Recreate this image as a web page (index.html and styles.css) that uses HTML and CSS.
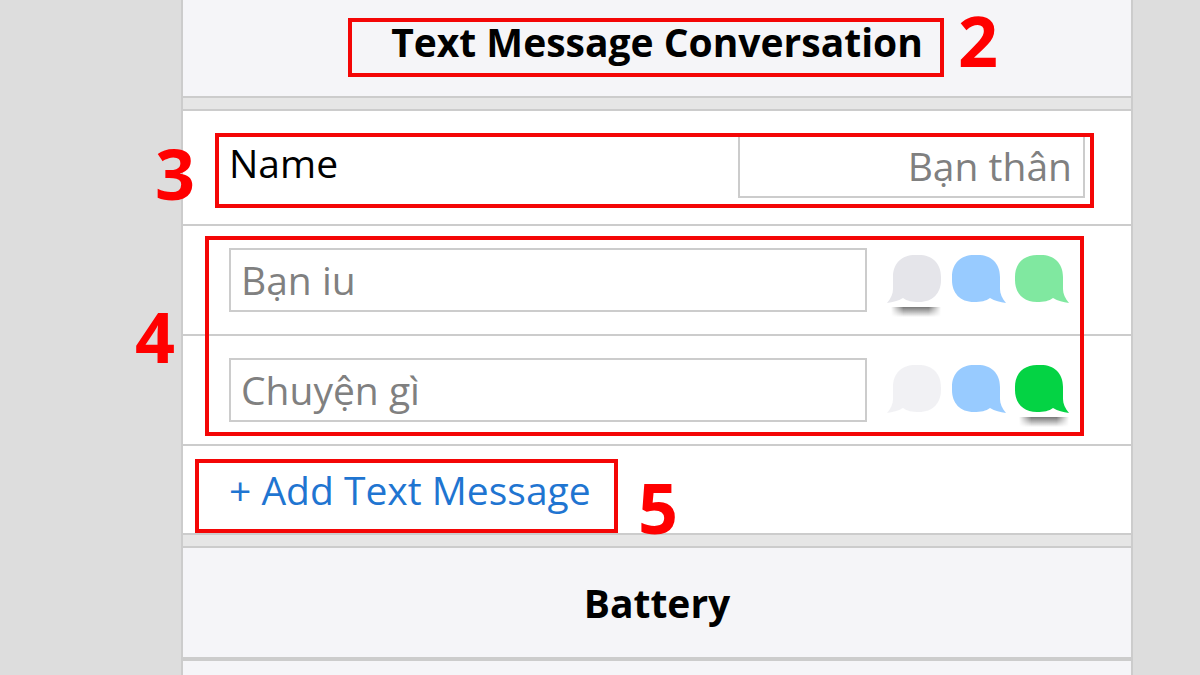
FILE: index.html
```html
<!DOCTYPE html>
<html lang="en">
  <head>
    <meta charset="UTF-8" />
    <meta name="viewport" content="width=device-width, initial-scale=1.0" />
    <title>Text Message Conversation</title>
    <link rel="stylesheet" href="styles.css">
  </head>
  <body>
    <svg width="0" height="0" class="defs" aria-hidden="true">
      <symbol id="bubble" viewBox="0 0 54 48">
        <path d="M48 22V34C48 39 50 43 54 48C48 47 43 46 38 43C34 46 29 47 22 47C8 47 0 38 0 25V22C0 8 9 0 22 0H26C39 0 48 8 48 22Z" />
      </symbol>
    </svg>

    <main class="panel">
      <header class="section-title">
        <h2>Text Message Conversation</h2>
        <div class="mark mark-title"><span class="step">2</span></div>
      </header>

      <form class="section">
        <div class="row name-row">
          <label for="name">Name</label>
          <input type="text" id="name" class="field" placeholder="Bạn thân">
          <div class="mark mark-name"><span class="step">3</span></div>
        </div>

        <div class="messages">
          <div class="row message-row">
            <input type="text" class="field" placeholder="Bạn iu" aria-label="Message 1">
            <div class="bubbles">
              <label class="bubble gray">
                <input type="radio" name="color1" aria-label="Gray" checked>
                <svg><use href="#bubble" /></svg>
              </label>
              <label class="bubble blue">
                <input type="radio" name="color1" aria-label="Blue">
                <svg><use href="#bubble" /></svg>
              </label>
              <label class="bubble green">
                <input type="radio" name="color1" aria-label="Green">
                <svg><use href="#bubble" /></svg>
              </label>
            </div>
          </div>
          <div class="row message-row">
            <input type="text" class="field" placeholder="Chuyện gì" aria-label="Message 2">
            <div class="bubbles">
              <label class="bubble gray">
                <input type="radio" name="color2" aria-label="Gray">
                <svg><use href="#bubble" /></svg>
              </label>
              <label class="bubble blue">
                <input type="radio" name="color2" aria-label="Blue">
                <svg><use href="#bubble" /></svg>
              </label>
              <label class="bubble green">
                <input type="radio" name="color2" aria-label="Green" checked>
                <svg><use href="#bubble" /></svg>
              </label>
            </div>
          </div>
          <div class="mark mark-messages"><span class="step">4</span></div>
        </div>

        <div class="row add-row">
          <a href="#" class="add-link">+ Add Text Message</a>
          <div class="mark mark-add"><span class="step">5</span></div>
        </div>
      </form>

      <header class="section-title">
        <h2>Battery</h2>
      </header>
      <div class="next-section"></div>
    </main>
  </body>
</html>
```
FILE: styles.css
```css
* {
  box-sizing: border-box;
}
body {
  display: flex;
  min-height: 100vh;
  margin: 0;
  padding: 0 67px 0 181px;
  background-color: #ddd;
  color: #000;
  font-family: "Open Sans", sans-serif;
  font-size: 39px;
  line-height: 54px;
}
.defs {
  position: absolute;
}
.panel {
  display: flex;
  flex: 1;
  flex-direction: column;
  margin-top: -13px;
  border: solid #ccc;
  border-width: 0 2px;
  background-color: #e6e6e6;
}

/* section headings */
.section-title {
  position: relative;
  padding: 28px 0 27px;
  border-bottom: 2px solid #ccc;
  background-color: #f5f5f8;
  text-align: center;
}
.section-title h2 {
  margin: 0;
  font-size: 39px;
  font-weight: 700;
}
.next-section {
  flex: 1;
  border-top: 2px solid #ccc;
  background-color: #f5f5f8;
}

/* rows */
.section {
  margin: 11px 0;
  border-top: 2px solid #ccc;
  background-color: #fff;
}
.section + .section-title {
  border-top: 2px solid #ccc;
}
.row {
  position: relative;
  display: flex;
  border-bottom: 2px solid #ccc;
}
.name-row {
  justify-content: space-between;
  padding: 23px 46px 26px;
}
.name-row label {
  padding-top: 2px;
}
.name-row .field {
  width: 347px;
  text-align: right;
}
.messages {
  position: relative;
}
.message-row {
  align-items: center;
  gap: 20px;
  padding: 22px 62px 22px 46px;
}
.message-row .field {
  flex: 1;
}
.add-row {
  padding: 17px 46px 16px;
}
.field {
  min-width: 0;
  height: 64px;
  padding: 0 11px 2px 10px;
  border: 2px solid #ccc;
  background-color: #fff;
  color: #000;
  font: inherit;
}
.field::placeholder {
  color: #808080;
  opacity: 1;
}
.add-link {
  color: #1f75d1;
  text-decoration: none;
}

/* bubble color picker */
.bubbles {
  display: flex;
  gap: 9px;
  padding-bottom: 3px;
}
.bubble {
  position: relative;
  display: flex;
  cursor: pointer;
}
.bubble input {
  position: absolute;
  margin: 0;
  opacity: 0;
}
.bubble svg {
  width: 54px;
  height: 48px;
  opacity: 0.5;
}
.bubble input:checked + svg {
  opacity: 1;
}
.bubble:has(input:checked)::before {
  content: "";
  position: absolute;
  top: 52px;
  left: 4px;
  width: 50px;
  height: 10px;
  background: linear-gradient(#777, #bbb 50%, transparent);
  mask: linear-gradient(to right, transparent, #000 25%, #000 75%, transparent);
}
.gray {
  margin-right: 2px;
  fill: #e5e5ea;
}
.gray svg {
  transform: scaleX(-1);
}
.bubble.gray::before {
  left: 0;
}
.blue {
  fill: #39f;
}
.green {
  fill: #04d344;
}

/* numbered marks */
.mark {
  position: absolute;
  border: 4px solid #f40606;
  pointer-events: none;
}
.step {
  position: absolute;
  color: #f00;
  font-size: 70px;
  font-weight: 700;
  line-height: 70px;
}
.mark-title {
  top: 31px;
  right: 187px;
  bottom: 19px;
  left: 165px;
}
.mark-title .step {
  top: -17px;
  left: calc(100% + 18px);
}
.mark-name {
  top: 22px;
  right: 37px;
  bottom: 16px;
  left: 32px;
}
.mark-name .step {
  top: 1px;
  right: calc(100% + 24px);
}
.mark-messages {
  top: 10px;
  right: 47px;
  bottom: 10px;
  left: 22px;
}
.mark-messages .step {
  top: 61px;
  right: calc(100% + 34px);
}
.mark-add {
  top: 13px;
  bottom: 0;
  left: 12px;
  width: 423px;
}
.mark-add .step {
  top: 9px;
  left: calc(100% + 24px);
}
```
